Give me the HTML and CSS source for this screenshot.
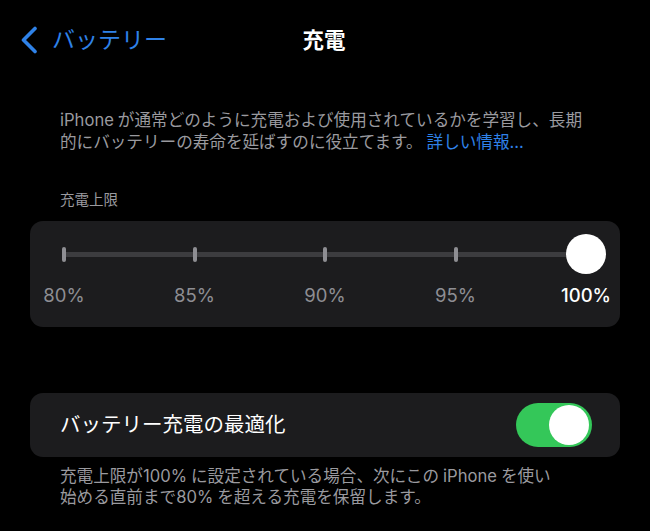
FILE: index.html
```html
<!DOCTYPE html>
<html lang="ja">
<head>
<meta charset="utf-8">
<link rel="stylesheet" href="styles.css">
</head>
<body>
<div class="screen">
  <header class="nav">
    <div class="back">
      <svg class="chev" width="18" height="28" viewBox="0 0 18 28"><path d="M15 2.5 L3.5 14 L15 25.5" fill="none" stroke="#2f82e8" stroke-width="3.6" stroke-linecap="round" stroke-linejoin="round"/></svg>
      <span class="back-label">バッテリー</span>
    </div>
    <h1 class="title">充電</h1>
    <div></div>
  </header>

  <p class="intro">iPhone<span class="gap"></span>が通常どのように充電および使用されているかを学習し、長期<br>的にバッテリーの寿命を延ばすのに役立てます。<span class="link">詳しい情報...</span></p>

  <div class="section-label">充電上限</div>
  <div class="card slider-card">
    <div class="rail">
      <div class="stop"><span class="tick"></span></div>
      <div class="stop"><span class="tick"></span></div>
      <div class="stop"><span class="tick"></span></div>
      <div class="stop"><span class="tick"></span></div>
      <div class="stop"><span class="thumb"></span></div>
    </div>
    <div class="labels">
      <div class="stop"><span class="pct">80%</span></div>
      <div class="stop"><span class="pct">85%</span></div>
      <div class="stop"><span class="pct">90%</span></div>
      <div class="stop"><span class="pct">95%</span></div>
      <div class="stop"><span class="pct active">100%</span></div>
    </div>
  </div>

  <div class="card toggle-card">
    <span class="row-label">バッテリー充電の最適化</span>
    <span class="toggle"><span class="knob"></span></span>
  </div>

  <p class="footnote">充電上限が100%<span class="gap"></span>に設定されている場合、次にこの<span class="gap"></span>iPhone<span class="gap"></span>を使い<br>始める直前まで80%<span class="gap"></span>を超える充電を保留します。</p>
</div>
</body>
</html>
```

FILE: styles.css
```css
html, body {
  margin: 0;
  padding: 0;
  background: #000;
}
body {
  font-family: "Inter", "Noto Sans CJK JP", sans-serif;
  color: #fff;
  width: 650px;
  height: 531px;
  overflow: hidden;
}
.screen {
  display: flex;
  flex-direction: column;
}
.nav {
  display: grid;
  grid-template-columns: 1fr auto 1fr;
  align-items: center;
  padding: 26px 0 0 20px;
  height: 28px;
}
.back {
  display: flex;
  align-items: center;
  gap: 14px;
}
.chev {
  display: block;
}
.back-label {
  color: #2f82e8;
  font-size: 23px;
  line-height: 28px;
}
.title {
  margin: 0;
  font-size: 21.5px;
  font-weight: 600;
  line-height: 28px;
  color: #fff;
  margin-left: -22px;
}
.gap {
  display: inline-block;
  width: 4px;
}
.intro {
  margin: 55px 0 0 0;
  padding: 0 40px 0 60px;
  font-size: 16.6px;
  line-height: 22px;
  color: #9a9a9f;
  white-space: nowrap;
}
.link {
  color: #2f82e8;
  margin-left: 4px;
}
.section-label {
  margin: 37px 0 0 60px;
  font-size: 14.5px;
  line-height: 20px;
  color: #9a9a9f;
}
.card {
  background: #1c1c1e;
  border-radius: 13px;
  margin: 0 30px;
}
.slider-card {
  margin-top: 11px;
  padding: 13px 34px 20px 34px;
  height: 73px;
}
.rail {
  display: flex;
  justify-content: space-between;
  align-items: center;
  height: 40px;
  background: linear-gradient(#3c3c3f, #3c3c3f) center / 100% 5px no-repeat;
}
.stop {
  width: 0;
  display: flex;
  justify-content: center;
  align-items: center;
}
.tick {
  flex: none;
  width: 4px;
  height: 15px;
  border-radius: 2px;
  background: #8e8e93;
}
.thumb {
  flex: none;
  width: 40px;
  height: 40px;
  border-radius: 50%;
  background: #fff;
}
.labels {
  display: flex;
  justify-content: space-between;
  margin-top: 9px;
  height: 24px;
}
.pct {
  flex: none;
  white-space: nowrap;
  font-size: 18.5px;
  line-height: 24px;
  color: #8e8e93;
}
.pct.active {
  color: #fff;
  font-weight: 500;
}
.toggle-card {
  margin-top: 66px;
  height: 44px;
  padding: 10px 28px 10px 30px;
  display: flex;
  align-items: center;
  justify-content: space-between;
}
.row-label {
  font-size: 20.5px;
  line-height: 28px;
  color: #fff;
}
.toggle {
  width: 76px;
  height: 44px;
  box-sizing: border-box;
  border-radius: 22px;
  background: #34c759;
  padding: 2px 3px 2px 2px;
  display: flex;
  justify-content: flex-end;
}
.knob {
  width: 40px;
  height: 40px;
  border-radius: 50%;
  background: #fff;
}
.footnote {
  margin: 9px 0 0 0;
  padding: 0 40px 0 60px;
  font-size: 16.6px;
  line-height: 21px;
  color: #9a9a9f;
  white-space: nowrap;
}
```
